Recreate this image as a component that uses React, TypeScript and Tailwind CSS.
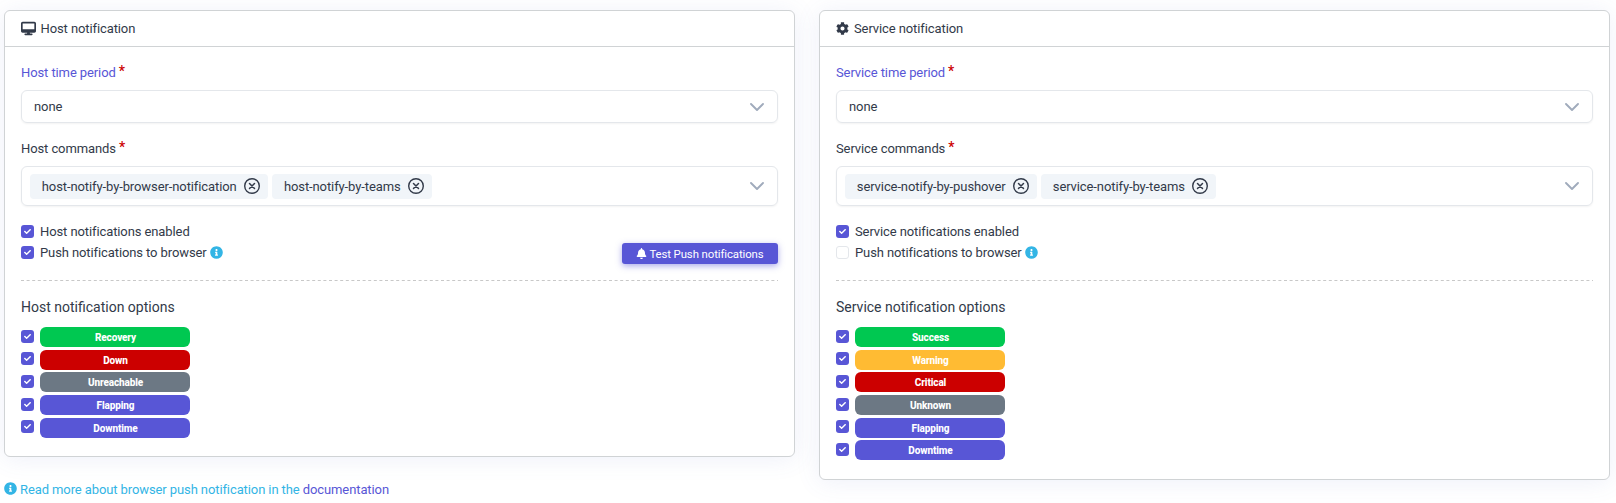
import type { ReactNode } from 'react';
import { FaBell, FaCheck, FaCog, FaInfoCircle } from 'react-icons/fa';
import { FaDesktop } from 'react-icons/fa6';

type Option = { label: string; color: string };

const GREEN = 'bg-[#00c851]';
const RED = 'bg-[#cc0000]';
const GREY = 'bg-[#6c7884]';
const YELLOW = 'bg-[#ffbb33]';
const PURPLE = 'bg-[#5856d6]';

const hostOptions: Option[] = [
  { label: 'Recovery', color: GREEN },
  { label: 'Down', color: RED },
  { label: 'Unreachable', color: GREY },
  { label: 'Flapping', color: PURPLE },
  { label: 'Downtime', color: PURPLE },
];

const serviceOptions: Option[] = [
  { label: 'Success', color: GREEN },
  { label: 'Warning', color: YELLOW },
  { label: 'Critical', color: RED },
  { label: 'Unknown', color: GREY },
  { label: 'Flapping', color: PURPLE },
  { label: 'Downtime', color: PURPLE },
];

function Chevron() {
  return (
    <svg className="size-[14px] shrink-0" viewBox="0 0 14 14" fill="none" stroke="#a0abbc" strokeWidth="1.9" strokeLinecap="round" strokeLinejoin="round">
      <path d="M1 4 L7 10 L13 4" />
    </svg>
  );
}

function RemoveIcon() {
  return (
    <svg className="size-4 shrink-0" viewBox="0 0 16 16" fill="none" stroke="#323a49" strokeLinecap="round">
      <circle cx="8" cy="8" r="7.3" strokeWidth="1.4" />
      <path d="M5.5 5.5 L10.5 10.5 M10.5 5.5 L5.5 10.5" strokeWidth="1.5" />
    </svg>
  );
}

function Checkbox({ checked }: { checked: boolean }) {
  return checked ? (
    <span className="flex size-[13px] shrink-0 items-center justify-center rounded-[3px] bg-[#5856d6]">
      <FaCheck className="size-[7px] text-white" />
    </span>
  ) : (
    <span className="size-[13px] shrink-0 rounded-[3px] border border-[#e4e7eb] bg-white" />
  );
}

function Label({ children, link }: { children: ReactNode; link?: boolean }) {
  return (
    <div className={link ? 'flex h-5 items-center text-[#5856d6]' : 'flex h-5 items-center'}>
      {children}
      <span className="ml-[3px] pb-[4px] text-[14px] leading-5 font-medium text-[#cc0000]">*</span>
    </div>
  );
}

function CheckRow({ label, checked, info }: { label: string; checked: boolean; info?: boolean }) {
  return (
    <div className="flex h-[21px] items-center">
      <Checkbox checked={checked} />
      <span className="ml-1.5">{label}</span>
      {info && <FaInfoCircle className="ml-[3.5px] size-[13px] text-[#33b5e5]" />}
    </div>
  );
}

type CardProps = {
  icon: ReactNode;
  name: string;
  commands: string[];
  push: boolean;
  options: Option[];
  action?: ReactNode;
};

function Card({ icon, name, commands, push, options, action }: CardProps) {
  return (
    <section className="w-[791px] rounded-[6px] border border-[#d0d3d5] bg-white shadow-[0_2px_24px_rgba(90,110,200,0.1)]">
      <header className="flex h-9 items-center border-b border-[#d0d3d5] px-4">
        {icon}
        <span>{name} notification</span>
      </header>
      <div className="px-4 pt-4 pb-4">
        <Label link>{name} time period</Label>
        <div className="mt-[7px] flex h-[33px] items-center justify-between rounded-[6px] border border-[#e4e7eb] pr-[13px] pl-3 shadow-[0_1px_2px_rgba(18,18,23,0.05)]">
          <span>none</span>
          <Chevron />
        </div>
        <div className="mt-[16px]">
          <Label>{name} commands</Label>
        </div>
        <div className="mt-[7px] flex h-10 items-center justify-between rounded-[6px] border border-[#e4e7eb] pr-[13px] pl-2 shadow-[0_1px_2px_rgba(18,18,23,0.05)]">
          <div className="flex gap-1">
            {commands.map((c) => (
              <span key={c} className="flex h-[25px] items-center gap-[7.5px] rounded-[4px] bg-[#f1f5f9] pr-2 pl-[11.8px]">
                <span className="pt-px">{c}</span>
                <RemoveIcon />
              </span>
            ))}
          </div>
          <Chevron />
        </div>
        <div className="mt-[15px] flex h-[42px] justify-between">
          <div>
            <CheckRow label={`${name} notifications enabled`} checked />
            <CheckRow label="Push notifications to browser" checked={push} info />
          </div>
          {action}
        </div>
        <svg className="mt-[17px] block h-px w-full">
          <line x1="0" y1="0.5" x2="757" y2="0.5" stroke="#c8c8c8" strokeDasharray="3 2.6" />
        </svg>
        <h3 className="mt-[16px] h-5 text-[14px] leading-5 tracking-normal">{name} notification options</h3>
        <div className="mt-[10px]">
          {options.map((o) => (
            <div key={o.label} className="flex h-[22.7px] items-start">
              <div className="mt-[2.6px]">
                <Checkbox checked />
              </div>
              <span className={`${o.color} ml-1.5 flex h-5 w-[150px] items-center justify-center rounded-[6px] pt-0.5 pl-px text-[10px] leading-none font-extrabold tracking-[-0.12px] text-white`}>
                {o.label}
              </span>
            </div>
          ))}
        </div>
      </div>
    </section>
  );
}

export default function App() {
  return (
    <main className="h-[503px] overflow-hidden bg-white pt-[10px] pl-1 font-[Roboto,sans-serif] text-[13px] leading-5 tracking-[-0.1px] text-[#323a49]">
      <div className="flex h-[470px] items-start gap-6">
        <div>
          <Card
            icon={<FaDesktop className="mr-[4.5px] size-[15px]" />}
            name="Host"
            commands={['host-notify-by-browser-notification', 'host-notify-by-teams']}
            push
            options={hostOptions}
            action={
              <button className="mt-[22px] flex h-[21px] w-[156px] items-center justify-center gap-0.5 rounded-[3px] bg-[#5856d6] text-[11.4px] tracking-[-0.1px] text-white shadow-[0_2px_6px_rgba(88,86,214,0.5)]">
                <FaBell className="size-[11px]" />
                Test Push notifications
              </button>
            }
          />
          <p className="mt-[22px] flex items-start text-[#33b5e5]">
            <FaInfoCircle className="mt-[3px] mr-[3px] size-[13px]" />
            <span className="pt-px">
              Read more about browser push notification in the <a className="text-[#5856d6]">documentation</a>
            </span>
          </p>
        </div>
        <Card
          icon={<FaCog className="mr-[5px] size-[13px]" />}
          name="Service"
          commands={['service-notify-by-pushover', 'service-notify-by-teams']}
          push={false}
          options={serviceOptions}
        />
      </div>
    </main>
  );
}
